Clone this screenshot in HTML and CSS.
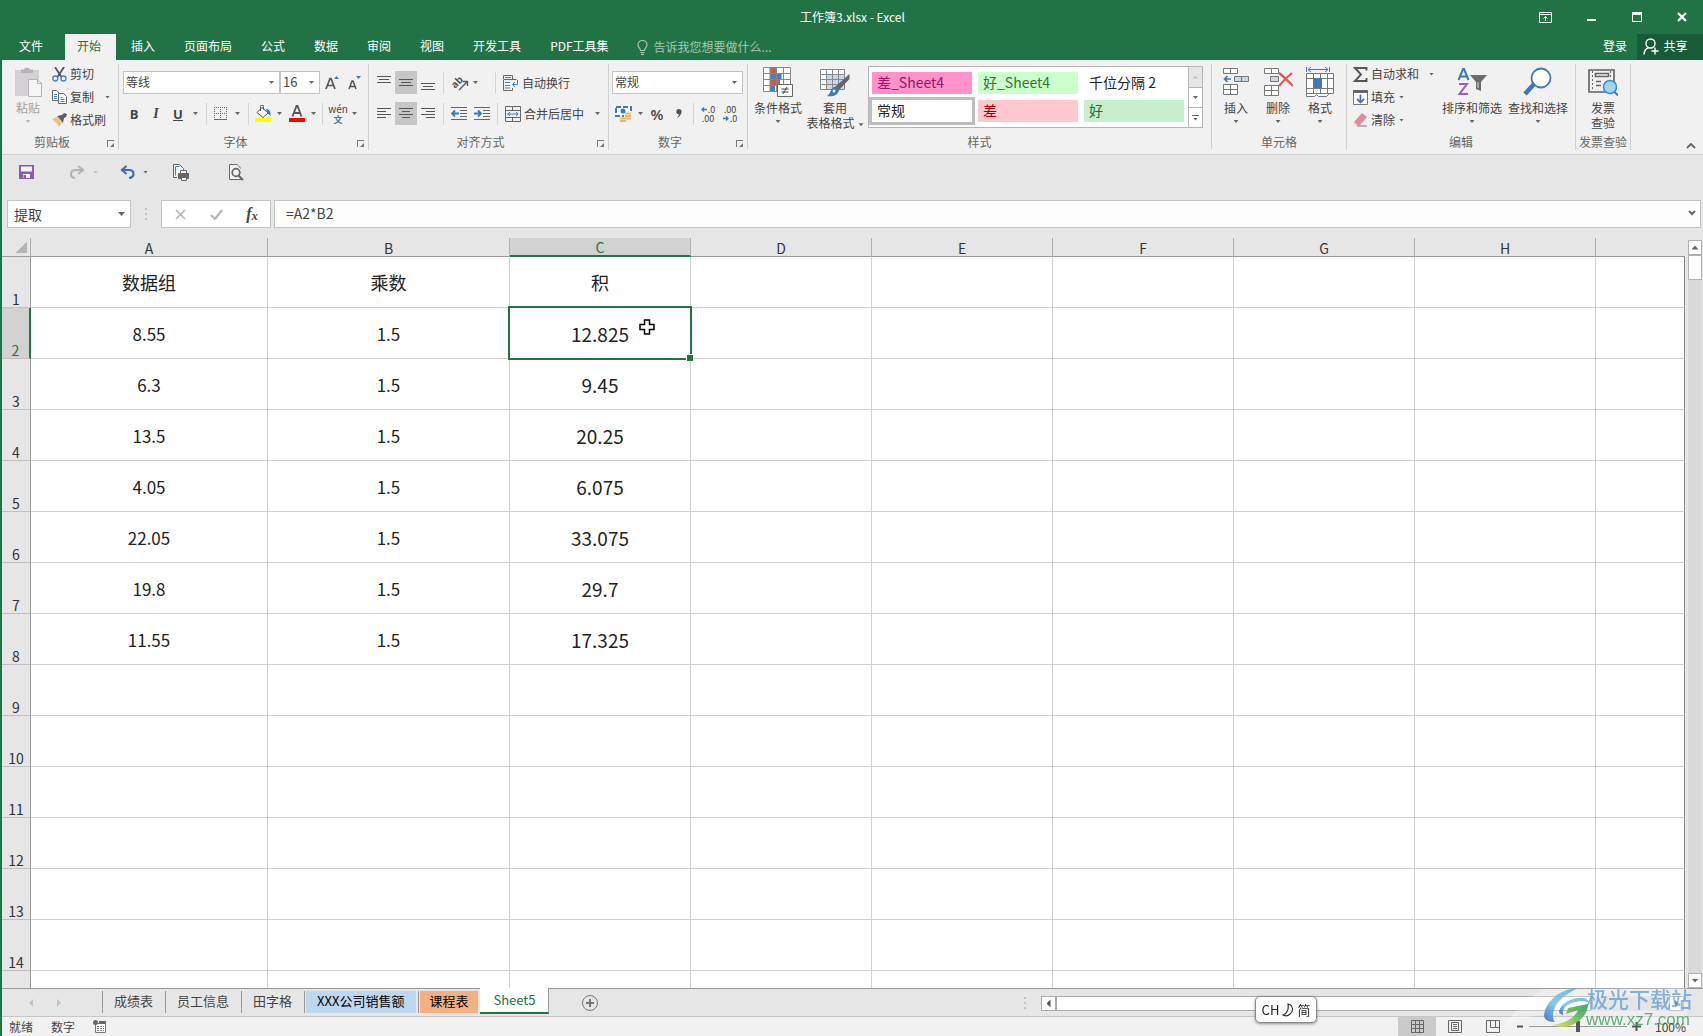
FILE: index.html
```html
<!DOCTYPE html>
<html lang="zh-CN">
<head>
<meta charset="utf-8">
<title>工作簿3.xlsx - Excel</title>
<link rel="stylesheet" href="styles.css">
</head>
<body>
<div class="app">
<header class="titlebar">
  <h1 class="doc-title">工作簿3.xlsx - Excel</h1>
  <div class="win-buttons">
    <button aria-label="功能区显示选项"><svg width="13" height="11" viewBox="0 0 13 11" fill="none" stroke="#fff"><path d="M.5.5h12v10H.5zM.5 2.500h12M6.500 9V4.500M4.500 6.500l2-2 2 2"/></svg></button>
    <button aria-label="最小化"><svg width="9" height="11" viewBox="0 0 9 11"><path d="M0 7h9v2H0z" fill="#fff"/></svg></button>
    <button aria-label="最大化"><svg width="10" height="10" viewBox="0 0 10 10"><path d="M.5.5h9v9h-9z" fill="none" stroke="#fff"/><path d="M0 0h10v3H0z" fill="#fff"/></svg></button>
    <button aria-label="关闭"><svg width="10" height="10" viewBox="0 0 10 10"><path d="M1 1l8 8M9 1L1 9" stroke="#fff" stroke-width="2.200"/></svg></button>
  </div>
</header>

<nav class="tabs">
  <button class="tab file">文件</button>
  <button class="tab active">开始</button>
  <button class="tab">插入</button>
  <button class="tab">页面布局</button>
  <button class="tab">公式</button>
  <button class="tab">数据</button>
  <button class="tab">审阅</button>
  <button class="tab">视图</button>
  <button class="tab">开发工具</button>
  <button class="tab">PDF工具集</button>
  <button class="tell-me"><svg width="11" height="15" viewBox="0 0 11 15" fill="none" stroke="#a5c9b3" stroke-width="1.200"><path d="M3.500 10.500C3.500 8 1 7.500 1 4.800a4.500 4.300 0 0 1 9 0c0 2.700-2.500 3.200-2.500 5.700zM3.500 12.500h4M4 14.400h3"/></svg>告诉我您想要做什么...</button>
  <div class="account">
    <button class="login">登录</button>
    <button class="share"><svg width="16" height="17" viewBox="0 0 16 17" fill="none" stroke="#fff" stroke-width="1.400"><circle cx="7.500" cy="5.500" r="4.500"/><path d="M1 16.500c.3-4 2-6 4.500-7M12 9.500v7M8.500 13h7"/></svg>共享</button>
  </div>
</nav>

<section class="ribbon">
  <div class="group">
    <div class="body clip">
      <button class="big muted"><svg width="30" height="30" viewBox="0 0 30 30"><path d="M2 3h24v26H2z" fill="#d3d1d3"/><path d="M8 6V2.500h3C11 0 17 0 17 2.500h3V6z" fill="#b5b3b5"/><path d="M15.500 12.500h9l4 4v13h-13z" fill="#f5f5f5" stroke="#b4b4b4"/><path d="M24.500 12.500v4h4" fill="none" stroke="#b4b4b4"/></svg><span>粘贴</span><i class="caret"></i></button>
      <div class="stack">
        <button class="item"><svg width="15" height="15" viewBox="0 0 15 15" fill="none"><path d="M3 0l6.500 10M12 0L5.500 10" stroke="#555" stroke-width="1.800"/><circle cx="3.300" cy="11.500" r="2.500" stroke="#4a7ebb" stroke-width="1.300"/><circle cx="11.500" cy="11.500" r="2.500" stroke="#4a7ebb" stroke-width="1.300"/></svg>剪切</button>
        <button class="item"><svg width="15" height="14" viewBox="0 0 15 14" fill="#fff" stroke="#666"><path d="M.5.5h4l3 3v7h-7z"/><path d="M6.500 3.500h5l3 3v7h-8z"/><path d="M2 4.500h3M2 6.500h3M2 8.500h3M8.500 7.500h2M8.500 9.500h4M8.500 11.500h4" stroke="#4a7ebb"/></svg>复制<i class="caret far"></i></button>
        <button class="item"><svg width="15" height="14" viewBox="0 0 15 14"><path d="M0 6l5-2 5 6-3 4c-1-3-4-5-7-8z" fill="#ecc07c"/><path d="M5 3l5-1 2-2 3 1-1 3-2 1-1 5z" fill="#5e5e5e"/></svg>格式刷</button>
      </div>
    </div>
    <div class="caption">剪贴板<button class="launch" aria-label="剪贴板设置"></button></div>
  </div>

  <div class="group">
    <div class="body rows">
      <div class="row">
        <span class="pick font"><select aria-label="字体"><option>等线</option></select></span><span class="pick size"><select aria-label="字号"><option>16</option></select></span>
        <button class="ib" aria-label="增大字号"><svg width="15" height="15" viewBox="0 0 15 15"><path d="M1 14L5 3.500h1L10 14M2.600 10.500h5.800" fill="none" stroke="#555" stroke-width="1.700"/><path d="M9 4h5l-2.500-3z" fill="#3f78b5"/></svg></button>
        <button class="ib" aria-label="减小字号"><svg width="15" height="15" viewBox="0 0 15 15"><path d="M2 14l3-8h1l3 8M3.300 11.500h4.500" fill="none" stroke="#555" stroke-width="1.500"/><path d="M9 1h5l-2.500 3z" fill="#3f78b5"/></svg></button>
      </div>
      <div class="row">
        <button class="ib b">B</button><button class="ib i">I</button><button class="ib u">U</button><i class="caret w14"></i><i class="sep"></i>
        <button class="ib" aria-label="边框"><svg width="13" height="13" viewBox="0 0 13 13" fill="none" stroke="#666"><path d="M.5 0v12M6.500 0v12M12.500 0v12M0 .5h13M0 6.500h13" stroke-dasharray="1 1"/><path d="M0 12.500h13"/></svg></button><i class="caret w14"></i><i class="sep"></i>
        <button class="ib w24" aria-label="填充颜色"><svg width="16" height="17" viewBox="0 0 16 17"><path d="M7 2.500l6 5.500-5 4.500-6-5z" fill="#fff" stroke="#555"/><path d="M5.500 6V1.500a1.500 1.500 0 0 1 3 0v3" fill="none" stroke="#555"/><path d="M11 4c3 0 5 2 4.500 7-1-1-1.500-2-2.500-2z" fill="#3f78b5"/><path d="M0 13h16v4H0z" fill="#ffff00"/></svg></button><i class="caret w10"></i>
        <button class="ib w24" aria-label="字体颜色"><svg width="16" height="17" viewBox="0 0 16 17"><path d="M3.500 11.500L7.500 1h1l4 10.500M5 8h6" fill="none" stroke="#555" stroke-width="1.800"/><path d="M0 13h16v4H0z" fill="#f00"/></svg></button><i class="caret w10"></i><i class="sep"></i>
        <button class="ib w26 wen" aria-label="拼音"><span>wén</span><b>文</b></button><i class="caret w8"></i>
      </div>
    </div>
    <div class="caption">字体<button class="launch" aria-label="字体设置"></button></div>
  </div>

  <div class="group">
    <div class="body rows align">
      <div class="row">
        <button class="ib" aria-label="顶端对齐"><svg width="14" height="16" viewBox="0 0 14 16" stroke="#555"><path d="M0 1.500h14M2 4.500h10M0 7.500h14"/></svg></button><button class="ib on" aria-label="垂直居中"><svg width="14" height="16" viewBox="0 0 14 16" stroke="#555"><path d="M0 4.500h14M2 7.500h10M0 10.500h14"/></svg></button><button class="ib" aria-label="底端对齐"><svg width="14" height="16" viewBox="0 0 14 16" stroke="#555"><path d="M0 8.500h14M2 11.500h10M0 14.500h14"/></svg></button><i class="sep"></i>
        <button class="ib w24" aria-label="方向"><svg class="orient" width="17" height="16" viewBox="0 0 17 16"><text x="0" y="11" transform="rotate(-45 5 9)" class="ab">ab</text><path d="M7 15l8-8M11 6.500h4.500V11" fill="none" stroke="#555" stroke-width="1.300"/></svg></button><i class="caret w22"></i><i class="sep"></i>
        <button class="item"><svg width="16" height="16" viewBox="0 0 16 16" fill="none" stroke="#4a7ebb"><path d="M.5 4V.500h9V4M.5 4.500h13M.5 5v10.500h9V13" stroke="#666"/><path d="M2 2.500h6M2 7.500h5M2 10.500h5M2 13h5M14.500 5v4.500H9.500M12 7l-2.500 2.500L12 12" /></svg>自动换行</button>
      </div>
      <div class="row">
        <button class="ib" aria-label="左对齐"><svg width="14" height="12" viewBox="0 0 14 12" stroke="#555"><path d="M0 .500h14M0 3.500h9M0 6.500h14M0 9.500h9"/></svg></button><button class="ib on" aria-label="居中"><svg width="14" height="12" viewBox="0 0 14 12" stroke="#555"><path d="M0 .500h14M3 3.500h8M0 6.500h14M3 9.500h8"/></svg></button><button class="ib" aria-label="右对齐"><svg width="14" height="12" viewBox="0 0 14 12" stroke="#555"><path d="M0 .500h14M5 3.500h9M0 6.500h14M5 9.500h9"/></svg></button><i class="sep"></i>
        <button class="ib" aria-label="减少缩进"><svg width="16" height="14" viewBox="0 0 16 14"><path d="M0 .500h16M9 3.500h7M9 6.500h7M9 9.500h7M0 12.500h16" stroke="#666"/><path d="M8 6.500H1M4 3.500l-3 3 3 3" stroke="#3f78b5" stroke-width="1.800" fill="none"/></svg></button><button class="ib w24" aria-label="增加缩进"><svg width="16" height="14" viewBox="0 0 16 14"><path d="M0 .500h16M9 3.500h7M9 6.500h7M9 9.500h7M0 12.500h16" stroke="#666"/><path d="M0 6.500h7M4 3.500l3 3-3 3" stroke="#3f78b5" stroke-width="1.800" fill="none"/></svg></button><i class="sep"></i>
        <button class="item"><svg width="16" height="16" viewBox="0 0 16 16" fill="none"><path d="M.5.500h15v15H.500zM.5 4.500h15M.5 11.500h15M7.500.500v4M7.500 11.500v4" stroke="#666"/><path d="M2.500 8h10M5 6L2.800 8 5 10M11 6l2.200 2L11 10" stroke="#3f78b5"/></svg>合并后居中<i class="caret far"></i></button>
      </div>
    </div>
    <div class="caption">对齐方式<button class="launch" aria-label="对齐设置"></button></div>
  </div>

  <div class="group">
    <div class="body rows">
      <div class="row"><span class="pick number"><select aria-label="数字格式"><option>常规</option></select></span></div>
      <div class="row">
        <button class="ib" aria-label="会计数字格式"><svg width="17" height="17" viewBox="0 0 17 17"><path d="M1 2h15v9H1z" fill="#fff" stroke="#3f78b5" stroke-width="2" stroke-dasharray="5 2"/><circle cx="8" cy="6" r="2.500" fill="#3f78b5"/><path d="M9 8h8v7H4v-3h5z" fill="#f0f0f0"/><path d="M10 8.500h6M10 11h6M5 13.500h6M10 13.500h6M5 16h6" stroke="#e8b76a" stroke-width="1.800"/></svg></button><i class="caret w12"></i>
        <button class="ib pct">%</button><button class="ib" aria-label="千位分隔"><svg width="6" height="9" viewBox="0 0 6 9"><path d="M3 0c4 0 3.500 6-2 9 1.500-2 2-3 1.500-4C-.5 5-.5 0 3 0z" fill="#555"/></svg></button><i class="sep"></i>
        <button class="ib dec" aria-label="增加小数位数"><span><svg width="6" height="5" viewBox="0 0 6 5"><path d="M6 2.500H1M3 .5l-2 2 2 2" fill="none" stroke="#3f78b5" stroke-width="1.400"/></svg>.0</span><span>.00</span></button><button class="ib dec" aria-label="减少小数位数"><span>.00</span><span><svg width="6" height="5" viewBox="0 0 6 5"><path d="M0 2.500h5M3 .5l2 2-2 2" fill="none" stroke="#3f78b5" stroke-width="1.400"/></svg>.0</span></button>
      </div>
    </div>
    <div class="caption">数字<button class="launch" aria-label="数字设置"></button></div>
  </div>

  <div class="group">
    <div class="body bigs styles">
      <button class="big"><svg width="30" height="30" viewBox="0 0 30 30"><path d="M.5.500h27v24H.500z" fill="#fff"/><path d="M7 1h6.500v6H7zM7 13h10v6H7z" fill="#d05a45"/><path d="M7 7h11.500v6H7zM7 19h5v5.500H7z" fill="#4a7ebb"/><path d="M.5.500h27v24H.500zM.5 6.500h27M.5 12.500h27M.5 18.500h27M7 .5v24M13.500.500v24M20.500.500v24" fill="none" stroke="#888"/><path d="M14.500 17.500h15v12h-15z" fill="#fff" stroke="#666"/><path d="M18.500 22h7M18.500 25h7M24 20l-4 7" stroke="#444"/></svg><span>条件格式</span><i class="caret"></i></button>
      <button class="big tf"><svg width="30" height="30" viewBox="0 0 30 30"><path d="M.5 2.500h24v20H.500z" fill="#fff"/><path d="M6 8h18v14H6z" fill="#c5d7ea"/><path d="M.5 2.500h24v20H.500zM.5 7.500h24M.5 12.500h24M.5 17.500h24M6.500 2.500v20M12.500 2.500v20M18.500 2.500v20" fill="none" stroke="#888"/><path d="M29.500 7v5L19 23l-4-3z" fill="#666"/><path d="M14 20c3-1 5 1 5 4-2 5-8 6-12 5 4-2 3-7 7-9z" fill="#3f78b5"/><circle cx="14" cy="24" r="1.500" fill="#fff"/></svg><span>套用</span><span>表格格式<i class="caret in"></i></span></button>
      <div class="gallery">
        <div class="swatches">
          <button class="sw s1">差_Sheet4</button><button class="sw s2">好_Sheet4</button><button class="sw">千位分隔 2</button>
          <button class="sw cur">常规</button><button class="sw s3">差</button><button class="sw s4">好</button>
        </div>
        <div class="gscroll"><button class="dis" aria-label="上"><i class="caret up"></i></button><button aria-label="下"><i class="caret"></i></button><button class="more" aria-label="更多"><i class="caret"></i></button></div>
      </div>
    </div>
    <div class="caption plain">样式</div>
  </div>

  <div class="group">
    <div class="body bigs cells">
      <button class="big"><svg width="30" height="30" viewBox="0 0 30 30" fill="#fff" stroke="#777"><path d="M2.500 1.500h14v5h-14zM9.500 1.500v5M2.500 17.500h14v10h-14zM9.500 17.500v10M2.500 22.500h14"/><path d="M13.500 9.500h14v5h-14zM20.500 9.500v5" fill="#c5d7ea"/><path d="M10 12H4M6.500 9L3.500 12l3 3" fill="none" stroke="#3f78b5" stroke-width="1.600"/></svg><span>插入</span><i class="caret"></i></button>
      <button class="big"><svg width="30" height="30" viewBox="0 0 30 30" fill="#fff" stroke="#777"><path d="M1.500 1.500h14v5h-14zM8.500 1.500v5M1.500 18.500h14v10h-14zM8.500 18.500v10M1.500 23.500h14"/><path d="M7.500 9.500h8v5h-8z" fill="#c5d7ea"/><path d="M16 6c4 3 9 8 14 13M29 6c-5 4-9 8-13 13" fill="none" stroke="#dd5a50" stroke-width="2.200"/></svg><span>删除</span><i class="caret"></i></button>
      <button class="big"><svg width="30" height="30" viewBox="0 0 30 30" fill="none" stroke="#777"><path d="M1.500 6.500h27v20h-4l-3 3h-8l-2-2-2 2h-8z" fill="#fff"/><path d="M1.500 11.500h27M1.500 21.500h27M1.500 26.500h24M8.500 6.500v20M15.500 6.500v20M22.500 6.500v20"/><path d="M8 11h9v10H8z" fill="#3f78b5" stroke="none"/><path d="M1.500 0v5M24.500 0v5M3 2.500h20M6 0L3 2.500 6 5M20 0l3 2.500L20 5" stroke="#3f78b5"/></svg><span>格式</span><i class="caret"></i></button>
    </div>
    <div class="caption plain">单元格</div>
  </div>

  <div class="group">
    <div class="body clip edit">
      <div class="stack">
        <button class="item"><svg width="15" height="15" viewBox="0 0 15 15"><path d="M13.500 3.500V1H2l6 6.500L2 14h11.500v-3" fill="none" stroke="#555" stroke-width="1.900"/></svg>自动求和<i class="caret far"></i></button>
        <button class="item"><svg width="15" height="15" viewBox="0 0 15 15"><path d="M.5.500h14v14H.500z" fill="#fff" stroke="#777"/><path d="M0 0h15v3H0z" fill="#666"/><path d="M7.500 4.500v8M4 9l3.500 3.500L11 9" fill="none" stroke="#3f78b5" stroke-width="1.800"/></svg>填充<i class="caret near"></i></button>
        <button class="item"><svg width="15" height="14" viewBox="0 0 15 14"><path d="M9 0l5 4-7 8H3L1 9z" fill="#e58a9a"/><path d="M1 9l5 4-3 0-2.500-2z" fill="#f6d5da"/><path d="M4 13h10" stroke="#777"/></svg>清除<i class="caret near"></i></button>
      </div>
      <button class="big sort"><svg width="30" height="30" viewBox="0 0 30 30" fill="none"><path d="M1.500 13L6 2h1l4.500 11M3 9.500h7" stroke="#3f78b5" stroke-width="2"/><path d="M2 17h8L2.500 27H11" stroke="#9b5fb5" stroke-width="2"/><path d="M13 8h17l-6 7v9l-5-2v-7z" fill="#6b6b6b"/><path d="M21 15v6" stroke="#ddd"/></svg><span>排序和筛选</span><i class="caret"></i></button>
      <button class="big find"><svg width="30" height="30" viewBox="0 0 30 30"><path d="M12 16L2 27" stroke="#3f78b5" stroke-width="4.500"/><circle cx="18" cy="11" r="9.500" fill="#fff" stroke="#3f78b5" stroke-width="1.800"/></svg><span>查找和选择</span><i class="caret"></i></button>
    </div>
    <div class="caption plain">编辑</div>
  </div>

  <div class="group">
    <div class="body bigs inv">
      <button class="big"><svg width="30" height="30" viewBox="0 0 30 30"><path d="M1 3h25v22H1z" fill="#f0f0f0" stroke="#5f5f5f" stroke-width="1.600"/><path d="M4.500 4v20" stroke="#666" stroke-dasharray="2 2"/><path d="M22.500 4v8" stroke="#666" stroke-dasharray="2 2"/><path d="M7.500 6.500h13v3h-13zM8 14.500h5M8 18.500h5" fill="none" stroke="#666" stroke-width="1.600"/><circle cx="22" cy="20" r="6.500" fill="#9fd3f8" stroke="#3f8dc8" stroke-width="1.500"/><path d="M26.500 25l3.500 3.500" stroke="#3f78b5" stroke-width="2"/></svg><span>发票</span><span>查验</span></button>
    </div>
    <div class="caption plain">发票查验</div>
  </div>
  <button class="collapse" aria-label="折叠功能区"><svg width="10" height="6" viewBox="0 0 10 6"><path d="M1 5l4-4 4 4" fill="none" stroke="#666" stroke-width="1.800"/></svg></button>
</section>

<section class="quick">
  <button aria-label="保存"><svg width="15" height="14" viewBox="0 0 15 14"><path d="M0 0h15v14H0z" fill="#8a5cab"/><path d="M2 1.500h11v5H2zM4 9h7v4H4z" fill="#f6f2fa"/><path d="M4.500 10h2.500v3H4.500z" fill="#8a5cab"/></svg></button>
  <button class="q2" aria-label="恢复"><svg width="15" height="14" viewBox="0 0 15 14"><path d="M8 1l5 4-5 4M13 5H6C0 5-1 12 5 13" fill="none" stroke="#b2b2b2" stroke-width="2"/></svg></button><i class="caret dim"></i>
  <button class="q3" aria-label="撤消"><svg width="15" height="14" viewBox="0 0 15 14"><path d="M6.500 1L2 5l4.500 4M2 5h7c6 0 6 7 0 8" fill="none" stroke="#3f6ea8" stroke-width="2.200"/></svg></button><i class="caret"></i>
  <button class="q4" aria-label="快速打印"><svg width="17" height="17" viewBox="0 0 17 17" fill="#f5f5f5" stroke="#666"><path d="M.5 13.500V.500h6l4 4v4M.5 13.500H4" /><path d="M2.500 11.500v-9h4" fill="none" stroke="#4a7ebb"/><path d="M5.500 9.500h10v5h-10z" fill="#666"/><path d="M7.500 6.500h6v3h-6zM8.500 13.500h5v3h-5z"/></svg></button>
  <button class="q5" aria-label="打印预览"><svg width="15" height="17" viewBox="0 0 15 17" fill="none" stroke="#666"><path d="M11.500 4.500v-.500L8 .5H.500v15h12" fill="#f5f5f5"/><circle cx="7" cy="8.500" r="3.800" stroke-width="1.800"/><path d="M9.500 11.500l4.500 4.500" stroke-width="2.200"/></svg></button>
</section>

<section class="formula">
  <span class="pick name"><input aria-label="名称框" value="提取"></span>
  <span class="grip"></span>
  <div class="fx">
    <button aria-label="取消"><svg width="11" height="11" viewBox="0 0 11 11"><path d="M1 1l9 9M10 1l-9 9" stroke="#b5b5b5" stroke-width="1.600"/></svg></button>
    <button aria-label="输入"><svg width="13" height="11" viewBox="0 0 13 11"><path d="M1 6l4 4 7-9" fill="none" stroke="#b5b5b5" stroke-width="2.200"/></svg></button>
    <button class="fn" aria-label="插入函数">f<small>x</small></button>
  </div>
  <div class="bar"><input aria-label="编辑栏" value="=A2*B2"><svg width="8" height="6" viewBox="0 0 8 6"><path d="M1 1l3 3 3-3" fill="none" stroke="#666" stroke-width="2"/></svg></div>
</section>

<main class="work">
  <div class="sheet">
    <table>
      <colgroup><col class="c0"><col class="ca"><col class="cb"><col class="cn"><col class="cn"><col class="cn"><col class="cn"><col class="cn"><col class="cn"><col></colgroup>
      <thead><tr><th class="corner"></th><th>A</th><th>B</th><th class="sel">C</th><th>D</th><th>E</th><th>F</th><th>G</th><th>H</th><th class="last"></th></tr></thead>
      <tbody>
        <tr><th>1</th><td class="hd">数据组</td><td class="hd">乘数</td><td class="hd">积</td><td></td><td></td><td></td><td></td><td></td><td></td></tr>
        <tr><th class="sel">2</th><td>8.55</td><td>1.5</td><td class="cur">12.825</td><td></td><td></td><td></td><td></td><td></td><td></td></tr>
        <tr><th>3</th><td>6.3</td><td>1.5</td><td>9.45</td><td></td><td></td><td></td><td></td><td></td><td></td></tr>
        <tr><th>4</th><td>13.5</td><td>1.5</td><td>20.25</td><td></td><td></td><td></td><td></td><td></td><td></td></tr>
        <tr><th>5</th><td>4.05</td><td>1.5</td><td>6.075</td><td></td><td></td><td></td><td></td><td></td><td></td></tr>
        <tr><th>6</th><td>22.05</td><td>1.5</td><td>33.075</td><td></td><td></td><td></td><td></td><td></td><td></td></tr>
        <tr><th>7</th><td>19.8</td><td>1.5</td><td>29.7</td><td></td><td></td><td></td><td></td><td></td><td></td></tr>
        <tr><th>8</th><td>11.55</td><td>1.5</td><td>17.325</td><td></td><td></td><td></td><td></td><td></td><td></td></tr>
        <tr><th>9</th><td></td><td></td><td></td><td></td><td></td><td></td><td></td><td></td><td></td></tr>
        <tr><th>10</th><td></td><td></td><td></td><td></td><td></td><td></td><td></td><td></td><td></td></tr>
        <tr><th>11</th><td></td><td></td><td></td><td></td><td></td><td></td><td></td><td></td><td></td></tr>
        <tr><th>12</th><td></td><td></td><td></td><td></td><td></td><td></td><td></td><td></td><td></td></tr>
        <tr><th>13</th><td></td><td></td><td></td><td></td><td></td><td></td><td></td><td></td><td></td></tr>
        <tr><th>14</th><td></td><td></td><td></td><td></td><td></td><td></td><td></td><td></td><td></td></tr>
        <tr><th></th><td></td><td></td><td></td><td></td><td></td><td></td><td></td><td></td><td></td></tr>
      </tbody>
    </table>
    <svg class="pointer" width="16" height="16" viewBox="0 0 16 16"><path d="M5.500 1h5v4.500H15v5h-4.500V15h-5v-4.500H1v-5h4.500z" fill="#fff" stroke="#000" stroke-width="1.500"/></svg>
  </div>
  <div class="vscroll">
    <button aria-label="向上滚动"><i class="caret big-c up"></i></button>
    <div class="vthumb"></div>
    <div class="vtrack"></div>
    <button aria-label="向下滚动"><i class="caret big-c"></i></button>
  </div>
</main>

<section class="sheets">
  <div class="nav"><i></i><i class="r"></i></div>
  <button class="st">成绩表</button><button class="st">员工信息</button><button class="st">田字格</button><button class="st blue">XXX公司销售额</button><button class="st orange">课程表</button><button class="st cur">Sheet5</button>
  <button class="add" aria-label="新工作表"><svg width="16" height="16" viewBox="0 0 16 16" fill="none" stroke="#777"><circle cx="8" cy="8" r="7.500"/><path d="M8 4v8M4 8h8" stroke-width="2"/></svg></button>
  <span class="grip"></span>
  <div class="hscroll"><button aria-label="向左滚动"><i class="tri l"></i></button><div class="hthumb"></div><div class="htrack"></div><button aria-label="向右滚动"><i class="tri"></i></button></div>
</section>

<footer class="status">
  <span>就绪</span><span>数字</span>
  <svg width="13" height="13" viewBox="0 0 13 13"><path d="M2.500 3.500h10v9h-10z" fill="#fff" stroke="#777"/><circle cx="2.500" cy="2.500" r="2.500" fill="#666"/><path d="M6 1h7v3H6z" fill="#666"/><path d="M4 6.500h7M4 8.500h7M4 10.500h7" stroke="#777" stroke-dasharray="2 1"/></svg>
  <div class="views">
    <button class="on" aria-label="普通"><svg width="13" height="13" viewBox="0 0 13 13" fill="none" stroke="#666"><path d="M.5.500h12v12H.500zM4.500.500v12M8.500.500v12M.5 4.500h12M.5 8.500h12"/></svg></button>
    <button aria-label="页面布局"><svg width="14" height="13" viewBox="0 0 14 13" fill="none" stroke="#666"><path d="M.5.500h13v12H.500zM3.500 2.500h7v8h-7zM5 4.500h4M5 6.500h4M5 8.500h4"/></svg></button>
    <button aria-label="分页预览"><svg width="14" height="13" viewBox="0 0 14 13" fill="none" stroke="#666"><path d="M.5.500h13v12H.500zM4.500.500v7h5v-7M9.500 7.500H14"/></svg></button>
  </div>
  <button class="z" aria-label="缩小"><svg width="7" height="9" viewBox="0 0 7 9"><path d="M0 4.500h6" stroke="#555" stroke-width="2"/></svg></button>
  <input class="zoom" type="range" min="10" max="190" value="100" aria-label="显示比例">
  <button class="z" aria-label="放大"><svg width="9" height="9" viewBox="0 0 9 9"><path d="M0 4.500h9M4.500 0v9" stroke="#555" stroke-width="2"/></svg></button>
  <span class="pct100">100%</span>
</footer>
</div>

<div class="ime">CH <svg width="12" height="14" viewBox="0 0 12 14"><path d="M6 1c5 1 6 7 2 10-2 2-5 2-7 1 4-1 6-6 5-11z" fill="none" stroke="#333" stroke-width="1.200"/></svg> 简</div>
<div class="mark">
  <svg width="194" height="52" viewBox="0 0 194 52"><defs><linearGradient id="sw1" x1="1" y1="0" x2="0" y2="1"><stop offset="0" stop-color="#5fb4e6"/><stop offset=".6" stop-color="#7fc4e8"/><stop offset="1" stop-color="#3568c0"/></linearGradient><linearGradient id="sw2" x1="0" y1="1" x2="1" y2="0"><stop offset="0" stop-color="#e6dc5a"/><stop offset=".6" stop-color="#5fb85a"/><stop offset="1" stop-color="#2f9a6a"/></linearGradient></defs>
    <path d="M2 44Q18 18 44 5l142-1v32H86Q44 20 2 44z" fill="#fff" opacity=".35"/>
    <path d="M78 4C59 4 44 18 43 32c1 4 5 6 11 6-4-5-2-18 10-26 5-4 9-6 14-8z" fill="url(#sw1)"/>
    <path d="M58 27c2-8 13-14 23-13 4 0 6 2 7 4-6-1-12-1-17 1-6 2-10 6-9 12-3-1-4-2-4-4z" fill="url(#sw1)"/>
    <path d="M67 24l20-4c0 12-12 22-24 23-6 0-9-1-12-2 12-1 23-7 26-15l-12 4z" fill="url(#sw2)"/>
  </svg>
  <p class="m1">极光下载站</p><p class="m2">www.xz7.com</p>
</div>
</body>
</html>
```
FILE: styles.css
```css
* { box-sizing: border-box; }
body {
  margin: 0;
  font: 12px/16px "Noto Sans CJK SC", sans-serif;
  color: #444;
  overflow: hidden;
}
button {
  font: inherit;
  color: inherit;
  background: none;
  border: 0;
  padding: 0;
  display: flex;
  align-items: center;
  justify-content: center;
  white-space: nowrap;
}
svg { display: block; flex: none; }
i { font-style: normal; }
input, select { font: inherit; color: inherit; border: 0; background: none; padding: 0; outline: 0; min-width: 0; }

.app {
  display: flex;
  flex-direction: column;
  height: 100vh;
  border-left: 2px solid #217346;
  background: #e6e6e6;
}

.titlebar { height: 34px; background: #217346; color: #fff; display: grid; grid-template-columns: 1fr auto 1fr; align-items: center; }
.doc-title { grid-column: 2; margin: 0; font-size: 12px; font-weight: 400; }
.win-buttons { display: flex; justify-content: flex-end; }
.win-buttons button { width: 46px; height: 30px; }
.win-buttons button:last-child { width: 42px; margin-left: 1px; }

.tabs { height: 26px; background: #217346; color: #fff; display: flex; }
.tab { padding: 0 14px 2px 15px; }
.tab.file { padding: 0 22px 2px 17px; }
.tab.active { background: #f1f1f1; color: #217346; padding: 0 15px 2px 12px; width: 51px; }
.tell-me { color: #a5c9b3; gap: 6px; margin-left: 14px; }
.account { margin-left: auto; display: flex; gap: 10px; }
.login { padding-bottom: 2px; }
.share { width: 66px; background: #185c37; gap: 4px; padding: 0 9px 2px 0; }

.ribbon { height: 95px; background: #f1f1f1; border-bottom: 1px solid #cfcfcf; display: flex; flex: none; padding: 4px 0; }
.group { border-right: 1px solid #d0d0d0; display: flex; flex-direction: column; }
.body { height: 72px; display: flex; }
.caption { height: 16px; color: #666; text-align: center; display: grid; grid-template-columns: 1fr 16px; white-space: nowrap; }
.caption.plain { display: block; }
.launch { justify-self: end; width: 7px; height: 7px; border: solid #777; border-width: 1px 0 0 1px; margin: 6px 4px 0 0; position: relative; }
.launch::after { content: ""; position: absolute; right: 0; bottom: 0; border: 2px solid; border-color: transparent #777 #777 transparent; }

.caret { display: inline-block; flex: none; width: 5px; height: 3px; background: #666; clip-path: polygon(0 0, 100% 0, 50% 100%); }
.caret.up { clip-path: polygon(0 100%, 100% 100%, 50% 0); }
.caret.big-c { width: 7px; height: 4px; }
.w14 { margin: 0 5px 0 4px; }
.w12 { margin: 0 3px 0 4px; }
.w10 { margin: 0 3px 0 2px; }
.w8 { margin: 0 0 0 1px; }
.w22 { margin: 0 14px 0 1px; }
.far { margin-left: 8px; }
.near { margin-left: 1px; }
.sep { width: 1px; height: 22px; background: #d4d4d4; margin: 0 3px; }

.big { flex-direction: column; justify-content: flex-start; padding-top: 3px; }
.big svg { margin-bottom: 3px; }
.big span { line-height: 15px; }
.big > .caret { margin-top: 5px; }
.big .in { margin-left: 4px; vertical-align: middle; }
.big.muted { color: #a0a0a0; width: 52px; }
.muted .caret { background: #bbb; }
.item { gap: 3px; }
.stack { display: flex; flex-direction: column; align-items: flex-start; gap: 7px; padding-top: 2px; }
.stack .item { height: 16px; }
.group:first-child { width: 117px; }
.group:first-child .stack { margin-left: -2px; }

.rows { flex-direction: column; gap: 8px; padding: 7px 0 0 4px; }
.row { display: flex; align-items: center; height: 23px; }
.group:nth-child(2) { width: 250px; }
.group:nth-child(2) .sep { margin: 0 2px 0 3px; }
.group:nth-child(3) { width: 240px; }
.align .sep { margin: 0 7px 0 3px; }
.align .sep:first-of-type { margin: 0 4px; }
.group:nth-child(4) { width: 139px; }
.group:nth-child(4) .rows { padding-left: 3px; }
.ib { width: 22px; height: 23px; }
.ib.on { background: #c6c6c6; }
.ib.w24 { width: 24px; }
.ib.w26 { width: 26px; }
.ib.b { font: 700 13px "Open Sans", sans-serif; }
.ib.i { font: italic 700 14px "Liberation Serif", serif; }
.ib.u { font: 700 13px "Open Sans", sans-serif; text-decoration: underline; }
.ab { font: 700 10px "Open Sans", sans-serif; fill: #555; }
.orient { overflow: visible; }
.ib.pct { font: 600 15px "Open Sans", sans-serif; }
.wen { flex-direction: column; font-size: 10px; line-height: 11px; }
.wen b { color: #3f78b5; font-size: 9px; line-height: 11px; }
.dec { flex-direction: column; font-size: 9px; line-height: 9px; }
.dec span { display: flex; align-items: center; gap: 1px; }

.pick { position: relative; display: flex; background: #fff; border: 1px solid #c3c3c3; height: 23px; }
.pick::after { content: ""; position: absolute; right: 5px; top: 9px; width: 5px; height: 3px; background: #666; clip-path: polygon(0 0, 100% 0, 50% 100%); pointer-events: none; }
.pick select, .pick input { appearance: none; width: 100%; padding: 0 0 1px 2px; }
.font { width: 157px; }
.size { width: 40px; margin-right: 1px; }
.size select { font-size: 13px; }
.number { width: 131px; }

.group:nth-child(5) { width: 464px; }
.styles .big:first-child { margin-left: 6px; width: 48px; }
.tf { width: 66px; }
.gallery { flex: 1; margin: 2px 8px 6px 0; background: #fff; border: 1px solid #b5b5b5; display: flex; height: 62px; }
.swatches { flex: 1; display: grid; grid-template-columns: repeat(3, 1fr); gap: 6px; padding: 5px 4px 5px 3px; }
.sw { justify-content: flex-start; font-size: 14px; padding: 0 0 2px 5px; color: #222; }
.s1 { background: #ff93c9; color: #9c1070; }
.s2 { background: #ccffcc; color: #2c7a2c; }
.s3 { background: #ffc7ce; color: #9c0006; }
.s4 { background: #c6efce; color: #216b2c; }
.sw.cur { outline: 3px solid #bdbdbd; }
.gscroll { width: 14px; border-left: 1px solid #b5b5b5; display: grid; grid-template-rows: repeat(3, 1fr); }
.gscroll button + button { border-top: 1px solid #b5b5b5; }
.gscroll .dis { background: #e6e6e6; }
.dis .caret { background: #c0c0c0; }
.more { flex-direction: column; gap: 2px; }
.more::before { content: ""; width: 7px; height: 1px; background: #666; }

.group:nth-child(6) { width: 135px; }
.cells { padding-left: 3px; }
.cells .big { width: 42px; }
.group:nth-child(7) { width: 229px; }
.edit .stack { padding-left: 6px; width: 92px; }
.edit .far { margin-left: 7px; }
.edit .big { width: 66px; }
.group:nth-child(8) { width: 55px; }
.inv { justify-content: center; }
.collapse { margin: auto 7px 1px auto; }

.quick { height: 36px; display: flex; align-items: center; padding: 0 0 2px 17px; flex: none; }
.q2 { margin: 0 8px 0 36px; }
.q3 { margin: 0 8px 0 22px; }
.q4 { margin-left: 25px; }
.q5 { margin-left: 39px; }
.dim { background: #bbb; }

.formula { display: flex; height: 28px; margin: 9px 2px 10px 5px; flex: none; font-size: 14px; }
.formula > * { height: 28px; }
.name { width: 124px; }
.name::after { top: 11px; right: 5px; width: 7px; height: 4px; }
.pick.name input { padding-left: 6px; }
.grip { background: radial-gradient(circle, #999 1px, transparent 1px) center / 4px 5px repeat-y; width: 4px; }
.formula .grip { height: 14px; margin: 7px 13px; }
.fx { width: 110px; display: grid; grid-template-columns: repeat(3, 1fr); background: #fff; border: 1px solid #c3c3c3; margin-right: 3px; }
.fn { font: italic 700 16px "Liberation Serif", serif; }
.fn small { font-size: 12px; margin-top: 4px; }
.bar { flex: 1; background: #fdfdfd; border: 1px solid #c3c3c3; display: flex; align-items: center; padding: 0 4px 2px 11px; }
.bar input { flex: 1; }

.work { flex: 1; min-height: 0; display: flex; border-bottom: 1px solid #999; }
.sheet { flex: 1; position: relative; overflow: hidden; min-width: 0; }
table { table-layout: fixed; width: 100%; border-collapse: separate; border-spacing: 0; }
.c0 { width: 29px; }
.ca { width: 237px; }
.cb { width: 242px; }
.cn { width: 181px; }
th { padding: 0; font-weight: 400; font-size: 14px; line-height: 15px; color: #333; border-right: 1px solid #b0b0b0; }
thead th { height: 19px; padding-top: 2px; border-bottom: 1px solid #999; }
thead .sel { background: #d2d2d2; color: #217346; border-bottom: 2px solid #217346; }
thead .last { border-right: 0; }
.corner { background: linear-gradient(135deg, transparent 50%, #b5b5b5 50%) right 3px bottom 3px / 11px 11px no-repeat; }
tbody th { height: 51px; border-right-color: #999; border-bottom: 1px solid #c0c0c0; vertical-align: bottom; }
tbody th.sel { background: #d2d2d2; color: #217346; border-right: 2px solid #217346; }
td { height: 51px; padding: 2px 0 0; background: #fff; border-right: 1px solid #d0d0d0; border-bottom: 1px solid #d0d0d0; text-align: center; font-size: 17px; line-height: 24px; color: #222; }
td:nth-child(4) { font-size: 19px; }
td.hd { font-size: 18px; padding-top: 0; }
td:last-child { border-right-color: #888; }
td.cur { position: relative; }
td.cur::before { content: ""; position: absolute; inset: -2px; border: 2px solid #217346; }
td.cur::after { content: ""; position: absolute; right: -3px; bottom: -3px; width: 6px; height: 6px; background: #217346; border: solid #fff; border-width: 1px 0 0 1px; }
.pointer { position: absolute; left: 637px; top: 81px; }

.vscroll { width: 18px; padding: 2px 1px 0 3px; display: flex; flex-direction: column; }
.vscroll button { height: 15px; flex: none; background: #fff; border: 1px solid #b0b0b0; }
.vthumb { height: 25px; background: #fff; border: 1px solid #b0b0b0; }
.vtrack { flex: 1; background: #dadada; }

.sheets { height: 28px; flex: none; display: flex; align-items: flex-start; font-size: 13px; border-bottom: 1px solid #c6c6c6; }
.nav { width: 100px; height: 28px; display: flex; gap: 24px; align-items: center; padding-left: 27px; }
.nav i, .tri { width: 4px; height: 8px; background: #c3c3c3; clip-path: polygon(0 50%, 100% 0, 100% 100%); }
.nav .r { clip-path: polygon(0 0, 100% 50%, 0 100%); }
.st { height: 22px; margin-top: 2px; padding: 0 12px 2px 11px; border-left: 1px solid #999; }
.st.blue { background: #bdd7ee; color: #000; padding: 0 12px 2px; border-right: 2px solid #e6e6e6; box-shadow: inset 1px 0 #e6e6e6; }
.st.orange { background: #f4b084; color: #000; padding: 0 10px 2px; border-right: 2px solid #e6e6e6; box-shadow: inset 1px 0 #e6e6e6; }
.st.cur { background: #fff; color: #217346; height: 26px; margin-top: -1px; padding: 0 13px; border: solid #999; border-width: 0 1px 0 0; border-bottom: 2px solid #217346; }
.add { margin: 6px 0 0 33px; }
.sheets > .grip { height: 14px; margin: 7px 14px 0 auto; }
.hscroll { width: 643px; height: 15px; display: flex; margin: 7px 19px 0 0; }
.hscroll button { width: 15px; background: #fff; border: 1px solid #aaa; }
.hthumb { flex: 1; background: #fff; border: 1px solid #aaa; }
.htrack { width: 78px; background: #dadada; }
.tri { background: #555; clip-path: polygon(0 0, 100% 50%, 0 100%); }
.tri.l { clip-path: polygon(0 50%, 100% 0, 100% 100%); }

.status { height: 19px; flex: none; background: #f1f1f1; display: flex; align-items: center; gap: 18px; padding-left: 7px; }
.views { margin-left: auto; display: flex; }
.views button { width: 38px; height: 19px; }
.views .on { background: #cacaca; }
.status .z { width: 10px; margin-left: -15px; }
.zoom { width: 98px; height: 19px; appearance: none; margin: 0 1px 0 -14px; background: linear-gradient(#999, #999) center / 100% 1px no-repeat; }
.zoom::-webkit-slider-thumb { appearance: none; width: 4px; height: 11px; background: #555; }
.pct100 { width: 48px; margin-left: -4px; }

.ime { position: fixed; right: 386px; bottom: 13px; width: 62px; height: 27px; background: #fff; border: 1px solid #888; border-radius: 5px; box-shadow: 0 1px 3px #0006; display: flex; align-items: center; justify-content: center; gap: 3px; font-size: 13px; color: #222; }
.mark { position: fixed; right: 8px; bottom: 0; width: 194px; height: 52px; pointer-events: none; }
.mark svg { opacity: .9; }
.mark p { position: absolute; margin: 0; right: 3px; opacity: .75; }
.m1 { top: 0; font-size: 21px; line-height: 28px; font-weight: 500; color: #5c9bd5; }
.mark .m2 { top: 27px; right: 5px; font: 17px/18px "Liberation Sans", sans-serif; color: #2f9a4c; }
```
